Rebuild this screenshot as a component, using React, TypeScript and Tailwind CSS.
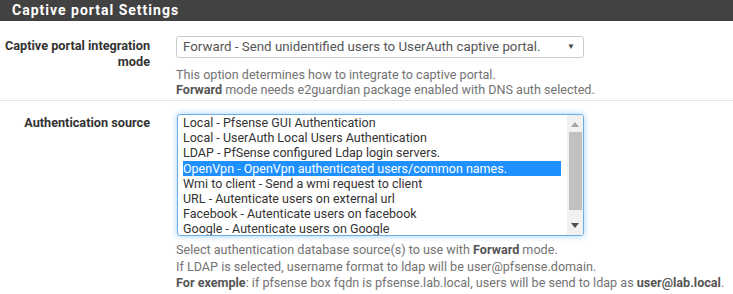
import { ReactNode } from "react";

const sources = [
  "Local - Pfsense GUI Authentication",
  "Local - UserAuth Local Users Authentication",
  "LDAP - PfSense configured Ldap login servers.",
  "OpenVpn - OpenVpn authenticated users/common names.",
  "Wmi to client - Send a wmi request to client",
  "URL - Autenticate users on external url",
  "Facebook - Autenticate users on facebook",
  "Google - Autenticate users on Google",
];

function FieldRow({ label, children }: { label: ReactNode; children: ReactNode }) {
  return (
    <div className="flex gap-[26px]">
      <div className="w-[150px] shrink-0 text-right text-[12.7px] font-bold leading-[16px] text-[#333333]">
        {label}
      </div>
      <div className="flex-1">{children}</div>
    </div>
  );
}

export default function App() {
  return (
    <div className="w-[733px] h-[294px] bg-white overflow-hidden font-['Roboto',sans-serif]">
      {/* panel heading */}
      <div className="h-[21px] bg-[#424242] pl-[12px] text-[14px] font-bold leading-[21px] tracking-[1px] text-white">
        Captive portal Settings
      </div>

      {/* integration mode */}
      <div className="pt-[15px] pb-[3px] border-b border-[#e5e5e5]">
        <FieldRow
          label={
            <div className="pt-[2px]">
              Captive portal integration
              <br />
              mode
            </div>
          }
        >
          <div className="w-[408px] h-[22px] border border-[#cccccc] rounded-[3px] flex items-center justify-between pl-[6px] pr-[8px] text-[13.3px] text-[#555555]">
            <span>Forward - Send unidentified users to UserAuth captive portal.</span>
            <span className="text-[8px] text-[#444444]">▼</span>
          </div>
          <div className="mt-[9px] text-[12.6px] leading-[15px] text-[#737373]">
            <div>This option determines how to integrate to captive portal.</div>
            <div>
              <b className="text-[#555555]">Forward</b> mode needs e2guardian package enabled with DNS auth selected.
            </div>
          </div>
        </FieldRow>
      </div>

      {/* authentication source */}
      <div className="pt-[13px]">
        <FieldRow label={<div className="pt-[1px]">Authentication source</div>}>
          <div className="ml-[1px] w-[407px] h-[122px] border border-[#66afe9] rounded-[3px] shadow-[0_0_6px_rgba(102,175,233,0.6)] flex overflow-hidden">
            <div className="flex-1 pl-[5px] pr-[6px] text-[12.5px] text-[#333333]">
              {sources.map((s, i) => (
                <div
                  key={s}
                  className={
                    i === 3
                      ? "h-[15.2px] leading-[15.2px] whitespace-nowrap bg-[#1e90ff] text-white"
                      : "h-[15.2px] leading-[15.2px] whitespace-nowrap"
                  }
                >
                  {s}
                </div>
              ))}
            </div>
            <div className="w-[16px] bg-[#f1f1f1] flex flex-col items-center">
              <svg className="mt-[7px]" width="8" height="5" viewBox="0 0 8 5">
                <path d="M0 5 L4 0 L8 5 Z" fill="#a3a3a3" />
              </svg>
              <div className="mt-[5px] w-[13px] h-[78px] bg-[#c1c1c1]" />
              <div className="flex-1" />
              <svg className="mb-[7px]" width="8" height="5" viewBox="0 0 8 5">
                <path d="M0 0 L8 0 L4 5 Z" fill="#505050" />
              </svg>
            </div>
          </div>
          <div className="mt-[6px] text-[12.6px] leading-[16.5px] text-[#737373]">
            <div>
              Select authentication database source(s) to use with <b className="text-[#555555]">Forward</b> mode.
            </div>
            <div>If LDAP is selected, username format to ldap will be user@pfsense.domain.</div>
            <div className="whitespace-nowrap">
              <b className="text-[#555555]">For exemple</b>: if pfsense box fqdn is pfsense.lab.local, users will be send to ldap as{" "}
              <b className="text-[#555555]">user@lab.local</b>.
            </div>
          </div>
        </FieldRow>
      </div>
    </div>
  );
}
